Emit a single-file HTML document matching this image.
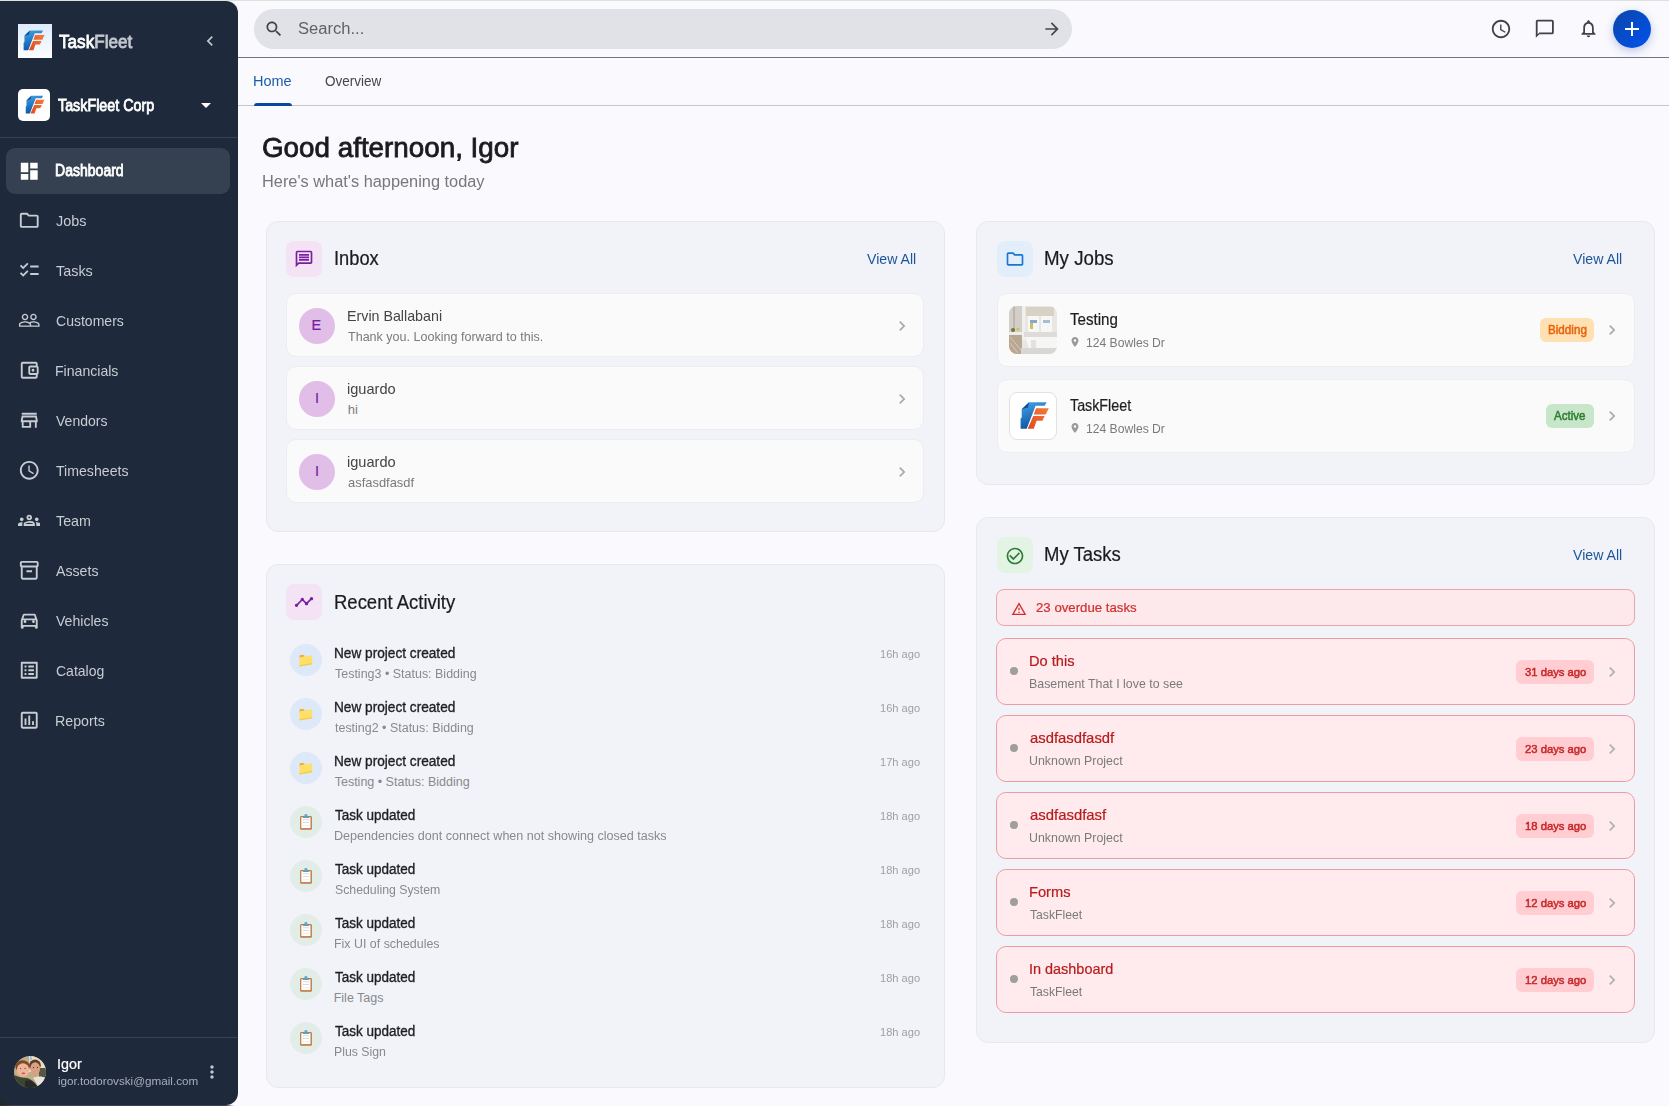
<!DOCTYPE html>
<html><head><meta charset="utf-8">
<style>
*{box-sizing:border-box;margin:0;padding:0}
html,body{width:1669px;height:1106px;overflow:hidden}
body{position:relative;background:#f9f9fe;font-family:"Liberation Sans",sans-serif}
.a{position:absolute;display:block}
.t{position:absolute;white-space:nowrap;line-height:1;transform-origin:0 0}
</style></head><body>
<div class="a" style="left:0;top:0;width:1669px;height:1px;background:#dfe1df"></div>
<div class="a" style="left:0;top:1090px;width:14px;height:16px;background:#252627"></div>
<div class="a" style="left:0;top:1105px;width:240px;height:1px;background:linear-gradient(90deg,#2a2c30 0,#3b4353 14px,#3b4353 226px,#f9f9fe 234px)"></div>
<div class="a" style="left:0;top:1px;width:238px;height:1104px;background:#1e293b;border-radius:0 12px 12px 9px"></div>
<div class="a" style="left:18px;top:24px;width:34px;height:34px;background:linear-gradient(180deg,#dcebfb,#fdfeff)"></div>
<svg class="a" style="left:15.4px;top:23.4px" width="35.7" height="35.7" viewBox="0 0 48 48">
<defs><linearGradient id="ba" x1="0" y1="0" x2="0.3" y2="1"><stop offset="0" stop-color="#45a3e6"/><stop offset="1" stop-color="#0b56a6"/></linearGradient>
<linearGradient id="oa" x1="1" y1="0" x2="0" y2="1"><stop offset="0" stop-color="#f47c3c"/><stop offset="1" stop-color="#e04a1c"/></linearGradient></defs>
<path fill="url(#ba)" d="M12.7 17.3 20 10.2H37.7L35.7 13.8H26.6L17.7 36.8H11.6V26.4L12.7 25.4Z"/>
<path fill="#0a4f9a" d="M12.7 17.3 20 10.2 19 15.5 12.7 17.3Z"/>
<path fill="url(#oa)" d="M27.1 16.2H39.8L36.7 22.6H24.8ZM24.3 24.1H35.7L33.4 28.8H27.6L24.8 36.8H18.7Z"/>
</svg>
<svg class="a" style="left:199.5px;top:31px;" width="20" height="20" viewBox="0 0 24 24"><path fill="#c3c7cf" d="M15.41 7.41L14 6l-6 6 6 6 1.41-1.41L10.83 12z"/></svg>
<div class="a" style="left:18px;top:89px;width:32px;height:32px;background:#fff;border-radius:5px"></div>
<svg class="a" style="left:18px;top:89px" width="32" height="32" viewBox="0 0 48 48">
<defs><linearGradient id="bb" x1="0" y1="0" x2="0.3" y2="1"><stop offset="0" stop-color="#45a3e6"/><stop offset="1" stop-color="#0b56a6"/></linearGradient>
<linearGradient id="ob" x1="1" y1="0" x2="0" y2="1"><stop offset="0" stop-color="#f47c3c"/><stop offset="1" stop-color="#e04a1c"/></linearGradient></defs>
<path fill="url(#bb)" d="M12.7 17.3 20 10.2H37.7L35.7 13.8H26.6L17.7 36.8H11.6V26.4L12.7 25.4Z"/>
<path fill="#0a4f9a" d="M12.7 17.3 20 10.2 19 15.5 12.7 17.3Z"/>
<path fill="url(#ob)" d="M27.1 16.2H39.8L36.7 22.6H24.8ZM24.3 24.1H35.7L33.4 28.8H27.6L24.8 36.8H18.7Z"/>
</svg>
<svg class="a" style="left:194px;top:93px;" width="24" height="24" viewBox="0 0 24 24"><path fill="#fff" d="M7 10l5 5 5-5z"/></svg>
<div class="a" style="left:0px;top:137px;width:238px;height:1px;background:#364152"></div>
<div class="a" style="left:6px;top:148px;width:224px;height:46px;background:#354051;border-radius:9px"></div>
<svg class="a" style="left:17.75px;top:159.75px;" width="22.5" height="22.5" viewBox="0 0 24 24"><path fill="#fff" d="M3 13h8V3H3v10zm0 8h8v-6H3v6zm10 0h8V11h-8v10zm0-18v6h8V3h-8z"/></svg>
<svg class="a" style="left:17.75px;top:209.25px;" width="22.5" height="22.5" viewBox="0 0 24 24"><path fill="#c8ccd3" d="M9.17 6l2 2H20v10H4V6h5.17M10 4H4c-1.1 0-1.99.9-1.99 2L2 18c0 1.1.9 2 2 2h16c1.1 0 2-.9 2-2V8c0-1.1-.9-2-2-2h-8l-2-2z"/></svg>
<svg class="a" style="left:17.75px;top:259.25px;" width="22.5" height="22.5" viewBox="0 0 24 24"><path fill="#c8ccd3" d="M22 7h-9v2h9V7zm0 8h-9v2h9v-2zM5.54 11 2 7.46l1.41-1.41 2.12 2.12 4.24-4.24 1.41 1.41L5.54 11zm0 8L2 15.46l1.41-1.41 2.12 2.12 4.24-4.24 1.41 1.41L5.54 19z"/></svg>
<svg class="a" style="left:17.75px;top:309.25px;" width="22.5" height="22.5" viewBox="0 0 24 24"><path fill="#c8ccd3" d="M16.5 13c-1.2 0-3.07.34-4.5 1-1.43-.67-3.3-1-4.5-1C5.33 13 1 14.08 1 16.25V19h22v-2.75c0-2.17-4.33-3.25-6.5-3.25zm-4 4.5h-10v-1.25c0-.54 2.56-1.75 5-1.75s5 1.21 5 1.75v1.25zm9 0H14v-1.25c0-.46-.2-.86-.52-1.22.88-.3 1.96-.53 3.02-.53 2.44 0 5 1.21 5 1.75v1.25zM7.5 12c1.93 0 3.5-1.57 3.5-3.5S9.43 5 7.5 5 4 6.57 4 8.5 5.57 12 7.5 12zm0-5.5c1.1 0 2 .9 2 2s-.9 2-2 2-2-.9-2-2 .9-2 2-2zm9 5.5c1.93 0 3.5-1.57 3.5-3.5S18.43 5 16.5 5 13 6.57 13 8.5s1.57 3.5 3.5 3.5zm0-5.5c1.1 0 2 .9 2 2s-.9 2-2 2-2-.9-2-2 .9-2 2-2z"/></svg>
<svg class="a" style="left:17.75px;top:359.25px;" width="22.5" height="22.5" viewBox="0 0 24 24"><path fill="#c8ccd3" d="M21 7.28V5c0-1.1-.9-2-2-2H5c-1.11 0-2 .9-2 2v14c0 1.1.89 2 2 2h14c1.1 0 2-.9 2-2v-2.28c.59-.35 1-.98 1-1.72V9c0-.74-.41-1.37-1-1.72zM20 9v6h-7V9h7zM5 19V5h14v2h-6c-1.1 0-2 .9-2 2v6c0 1.1.9 2 2 2h6v2H5zM16 13.5a1.5 1.5 0 1 0 0-3 1.5 1.5 0 0 0 0 3z"/></svg>
<svg class="a" style="left:17.75px;top:409.25px;" width="22.5" height="22.5" viewBox="0 0 24 24"><path fill="#c8ccd3" d="M18.36 9l.6 3H5.04l.6-3h12.72M20 4H4v2h16V4zm0 3H4l-1 5v2h1v6h10v-6h4v6h2v-6h1v-2l-1-5zM6 18v-4h6v4H6z"/></svg>
<svg class="a" style="left:17.75px;top:459.25px;" width="22.5" height="22.5" viewBox="0 0 24 24"><path fill="#c8ccd3" d="M11.99 2C6.47 2 2 6.48 2 12s4.47 10 9.99 10C17.52 22 22 17.52 22 12S17.52 2 11.99 2zM12 20c-4.42 0-8-3.58-8-8s3.58-8 8-8 8 3.58 8 8-3.58 8-8 8zm.5-13H11v6l5.25 3.15.75-1.23-4.5-2.67z"/></svg>
<svg class="a" style="left:17.75px;top:509.25px;" width="22.5" height="22.5" viewBox="0 0 24 24"><path fill="#c8ccd3" d="M4 13c1.1 0 2-.9 2-2s-.9-2-2-2-2 .9-2 2 .9 2 2 2zm1.13 1.1c-.37-.06-.74-.1-1.13-.1-.99 0-1.93.21-2.78.58C.48 14.9 0 15.62 0 16.43V18h4.5v-1.61c0-.83.23-1.61.63-2.29zM20 13c1.1 0 2-.9 2-2s-.9-2-2-2-2 .9-2 2 .9 2 2 2zm4 3.43c0-.81-.48-1.53-1.22-1.85-.85-.37-1.79-.58-2.78-.58-.39 0-.76.04-1.13.1.4.68.63 1.46.63 2.29V18H24v-1.57zm-6.76-2.78c-1.17-.52-2.61-.9-4.24-.9-1.63 0-3.07.39-4.24.9C6.68 14.13 6 15.21 6 16.39V18h12v-1.61c0-1.18-.68-2.26-1.76-2.74zM8.07 16c.09-.23.13-.39.91-.69.97-.38 1.99-.56 3.02-.56s2.05.18 3.02.56c.77.3.81.46.91.69H8.07zM12 8c.55 0 1 .45 1 1s-.45 1-1 1-1-.45-1-1 .45-1 1-1m0-2c-1.66 0-3 1.34-3 3s1.34 3 3 3 3-1.34 3-3-1.34-3-3-3z"/></svg>
<svg class="a" style="left:17.75px;top:559.25px;" width="22.5" height="22.5" viewBox="0 0 24 24"><path fill="#c8ccd3" d="M20 2H4c-1 0-2 .9-2 2v3.01c0 .72.43 1.34 1 1.69V20c0 1.1 1.1 2 2 2h14c.9 0 2-.9 2-2V8.7c.57-.35 1-.97 1-1.69V4c0-1.1-1-2-2-2zm-1 18H5V9h14v11zm1-13H4V4h16v3zM9 12h6v2H9z"/></svg>
<svg class="a" style="left:17.75px;top:609.25px;" width="22.5" height="22.5" viewBox="0 0 24 24"><path fill="#c8ccd3" d="M18.92 6.01C18.72 5.42 18.16 5 17.5 5h-11c-.66 0-1.21.42-1.42 1.01L3 12v8c0 .55.45 1 1 1h1c.55 0 1-.45 1-1v-1h12v1c0 .55.45 1 1 1h1c.55 0 1-.45 1-1v-8l-2.08-5.99zM6.85 7h10.29l1.08 3.11H5.77L6.85 7zM19 17H5v-5h14v5zM7.5 15a1.5 1.5 0 1 0 0-3 1.5 1.5 0 0 0 0 3zM16.5 15a1.5 1.5 0 1 0 0-3 1.5 1.5 0 0 0 0 3z"/></svg>
<svg class="a" style="left:17.75px;top:659.25px;" width="22.5" height="22.5" viewBox="0 0 24 24"><path fill="#c8ccd3" d="M19 5v14H5V5h14m1.1-2H3.9c-.5 0-.9.4-.9.9v16.2c0 .4.4.9.9.9h16.2c.4 0 .9-.5.9-.9V3.9c0-.5-.5-.9-.9-.9zM11 7h6v2h-6V7zm0 4h6v2h-6v-2zm0 4h6v2h-6zM7 7h2v2H7zm0 4h2v2H7zm0 4h2v2H7z"/></svg>
<svg class="a" style="left:17.75px;top:709.25px;" width="22.5" height="22.5" viewBox="0 0 24 24"><path fill="#c8ccd3" d="M19 3H5c-1.1 0-2 .9-2 2v14c0 1.1.9 2 2 2h14c1.1 0 2-.9 2-2V5c0-1.1-.9-2-2-2zm0 16H5V5h14v14zM7 10h2v7H7zm4-3h2v10h-2zm4 6h2v4h-2z"/></svg>
<div class="a" style="left:0px;top:1037px;width:238px;height:1px;background:#364152"></div>
<svg class="a" style="left:14px;top:1056px;filter:blur(0.3px)" width="32" height="32" viewBox="0 0 32 32"><defs><clipPath id="avc"><circle cx="16" cy="16" r="16"/></clipPath></defs><g clip-path="url(#avc)">
<rect width="32" height="32" fill="#c2ab88"/><rect x="15" y="0" width="17" height="16" fill="#e9dcc4"/><rect x="16" y="0" width="2" height="4" fill="#9ec3e6"/><rect x="25" y="12" width="8" height="12" fill="#555644"/>
<ellipse cx="8.6" cy="10.5" rx="7.2" ry="6.2" fill="#7a4a2a"/><ellipse cx="21" cy="9.2" rx="5.8" ry="5.6" fill="#5e3d25"/>
<ellipse cx="9" cy="14" rx="6.3" ry="6.8" fill="#efb596"/><ellipse cx="21.2" cy="12.5" rx="4.9" ry="6.3" fill="#d9a084"/>
<circle cx="6.6" cy="12.6" r=".7" fill="#4a5d78"/><circle cx="11.1" cy="12.4" r=".7" fill="#4a5d78"/><circle cx="19.4" cy="11.6" r=".6" fill="#3a2a22"/><circle cx="23.4" cy="11.6" r=".6" fill="#3a2a22"/><ellipse cx="9.4" cy="17.4" rx="1.8" ry=".8" fill="#b85a55"/>
<path d="M0 19 C4 21 9 22 13 22 C17 23 22 27 25 32 L0 32Z" fill="#3b4530"/><path d="M11 25 C15 23 19 25 23 30 L21 32 L11 32Z" fill="#262a2a"/>
<path d="M19 22 C23 20 28 20 32 22 L32 32 L24 32 C23 28 21 24 19 22Z" fill="#e9e3d8"/>
</g></svg>
<svg class="a" style="left:202px;top:1062px;" width="20" height="20" viewBox="0 0 24 24"><path fill="#c3c7cf" d="M12 8c1.1 0 2-.9 2-2s-.9-2-2-2-2 .9-2 2 .9 2 2 2zm0 2c-1.1 0-2 .9-2 2s.9 2 2 2 2-.9 2-2-.9-2-2-2zm0 6c-1.1 0-2 .9-2 2s.9 2 2 2 2-.9 2-2-.9-2-2-2z"/></svg>
<div class="a" style="left:238px;top:57px;width:1431px;height:1px;background:#72767e"></div>
<div class="a" style="left:254px;top:9px;width:818px;height:40px;background:#e1e2e7;border-radius:20px"></div>
<svg class="a" style="left:264px;top:19px;" width="20" height="20" viewBox="0 0 24 24"><path fill="#3f4248" d="M15.5 14h-.79l-.28-.27C15.41 12.59 16 11.11 16 9.5 16 5.91 13.09 3 9.5 3S3 5.91 3 9.5 5.91 16 9.5 16c1.61 0 3.09-.59 4.23-1.57l.27.28v.79l5 4.99L20.49 19l-4.99-5zm-6 0C7.01 14 5 11.99 5 9.5S7.01 5 9.5 5 14 7.01 14 9.5 11.99 14 9.5 14z"/></svg>
<svg class="a" style="left:1042px;top:19px;" width="20" height="20" viewBox="0 0 24 24"><path fill="#44474d" d="M12 4l-1.41 1.41L16.17 11H4v2h12.17l-5.58 5.59L12 20l8-8z"/></svg>
<svg class="a" style="left:1490px;top:17.7px;" width="22" height="22" viewBox="0 0 24 24"><path fill="#3f4248" d="M11.99 2C6.47 2 2 6.48 2 12s4.47 10 9.99 10C17.52 22 22 17.52 22 12S17.52 2 11.99 2zM12 20c-4.42 0-8-3.58-8-8s3.58-8 8-8 8 3.58 8 8-3.58 8-8 8zm.5-13H11v6l5.25 3.15.75-1.23-4.5-2.67z"/></svg>
<svg class="a" style="left:1534.2px;top:17.9px;" width="21.6" height="21.6" viewBox="0 0 24 24"><path fill="#3f4248" d="M20 2H4c-1.1 0-2 .9-2 2v18l4-4h14c1.1 0 2-.9 2-2V4c0-1.1-.9-2-2-2zm0 14H6l-2 2V4h16v12z"/></svg>
<svg class="a" style="left:1578.4px;top:18px;" width="21" height="21" viewBox="0 0 24 24"><path fill="#3f4248" d="M12 22c1.1 0 2-.9 2-2h-4c0 1.1.89 2 2 2zm6-6v-5c0-3.07-1.64-5.64-4.5-6.32V4c0-.83-.67-1.5-1.5-1.5s-1.5.67-1.5 1.5v.68C7.63 5.36 6 7.92 6 11v5l-2 2v1h16v-1l-2-2zm-2 1H8v-6c0-2.48 1.51-4.5 4-4.5s4 2.02 4 4.5v6z"/></svg>
<div class="a" style="left:1613px;top:10px;width:38px;height:38px;border-radius:50%;background:linear-gradient(135deg,#0b47a8,#0052f0);box-shadow:0 3px 8px rgba(30,60,160,.28)"></div>
<svg class="a" style="left:1620px;top:17px;" width="24" height="24" viewBox="0 0 24 24"><path fill="#fff" d="M19 13h-6v6h-2v-6H5v-2h6V5h2v6h6v2z"/></svg>
<div class="a" style="left:238px;top:105px;width:1431px;height:1px;background:#c7c8cd"></div>
<div class="a" style="left:254px;top:103px;width:38px;height:3px;background:#0b47a1;border-radius:3px 3px 0 0"></div>
<div class="a" style="left:266px;top:221px;width:679px;height:311px;background:#f2f3f8;border:1px solid #e9e9ec;border-radius:12px"></div>
<div class="a" style="left:286px;top:241px;width:36px;height:36px;background:#f3e3f4;border-radius:8px"></div>
<svg class="a" style="left:294px;top:249px;" width="20" height="20" viewBox="0 0 24 24"><path fill="#7b1fa2" d="M4 4h16v12H5.17L4 17.17V4m0-2c-1.1 0-1.99.9-1.99 2L2 22l4-4h14c1.1 0 2-.9 2-2V4c0-1.1-.9-2-2-2H4zm2 10h12v2H6v-2zm0-3h12v2H6V9zm0-3h12v2H6V6z"/></svg>
<div class="a" style="left:286px;top:293px;width:638px;height:64px;background:#fafafa;border:1px solid #ededf0;border-radius:10px"></div>
<div class="a" style="left:299px;top:307.5px;width:36px;height:36px;background:#e1bee7;border-radius:50%"></div>
<svg class="a" style="left:891.6px;top:315.8px;" width="20" height="20" viewBox="0 0 24 24"><path fill="#aaaaaa" d="M10 6L8.59 7.41 13.17 12l-4.58 4.59L10 18l6-6z"/></svg>
<div class="a" style="left:286px;top:366px;width:638px;height:64px;background:#fafafa;border:1px solid #ededf0;border-radius:10px"></div>
<div class="a" style="left:299px;top:380.5px;width:36px;height:36px;background:#e1bee7;border-radius:50%"></div>
<svg class="a" style="left:891.6px;top:388.8px;" width="20" height="20" viewBox="0 0 24 24"><path fill="#aaaaaa" d="M10 6L8.59 7.41 13.17 12l-4.58 4.59L10 18l6-6z"/></svg>
<div class="a" style="left:286px;top:439px;width:638px;height:64px;background:#fafafa;border:1px solid #ededf0;border-radius:10px"></div>
<div class="a" style="left:299px;top:453.5px;width:36px;height:36px;background:#e1bee7;border-radius:50%"></div>
<svg class="a" style="left:891.6px;top:461.8px;" width="20" height="20" viewBox="0 0 24 24"><path fill="#aaaaaa" d="M10 6L8.59 7.41 13.17 12l-4.58 4.59L10 18l6-6z"/></svg>
<div class="a" style="left:266px;top:564px;width:679px;height:524px;background:#f2f3f8;border:1px solid #e9e9ec;border-radius:12px"></div>
<div class="a" style="left:286px;top:584px;width:36px;height:36px;background:#f3e3f4;border-radius:8px"></div>
<svg class="a" style="left:294px;top:592px;" width="20" height="20" viewBox="0 0 24 24"><path fill="#7b1fa2" d="M23 8c0 1.1-.9 2-2 2-.18 0-.35-.02-.51-.07l-3.56 3.55c.05.16.07.34.07.52 0 1.1-.9 2-2 2s-2-.9-2-2c0-.18.02-.36.07-.52l-2.55-2.55c-.16.05-.34.07-.52.07s-.36-.02-.52-.07l-4.55 4.56c.05.16.07.33.07.51 0 1.1-.9 2-2 2s-2-.9-2-2 .9-2 2-2c.18 0 .35.02.51.07l4.56-4.55C8.02 9.36 8 9.18 8 9c0-1.1.9-2 2-2s2 .9 2 2c0 .18-.02.36-.07.52l2.55 2.55c.16-.05.34-.07.52-.07s.36.02.52.07l3.55-3.56C19.02 8.35 19 8.18 19 8c0-1.1.9-2 2-2s2 .9 2 2z"/></svg>
<div class="a" style="left:290px;top:644px;width:32px;height:32px;background:#dde8f8;border-radius:50%"></div>
<svg class="a" style="left:298px;top:652px" width="16" height="16" viewBox="0 0 16 16"><rect x="1.6" y="2.9" width="4.8" height="4.2" rx="1.2" fill="#f2a93b"/><path fill="#fedf68" d="M1.5 5.4 6 4.6 14.1 3.2 14.1 12.3 1.5 14.6Z"/><path fill="#f6c94a" d="M1.5 13.2 14.1 10.9 14.1 12.3 1.5 14.6Z"/></svg>
<div class="a" style="left:290px;top:698px;width:32px;height:32px;background:#dde8f8;border-radius:50%"></div>
<svg class="a" style="left:298px;top:706px" width="16" height="16" viewBox="0 0 16 16"><rect x="1.6" y="2.9" width="4.8" height="4.2" rx="1.2" fill="#f2a93b"/><path fill="#fedf68" d="M1.5 5.4 6 4.6 14.1 3.2 14.1 12.3 1.5 14.6Z"/><path fill="#f6c94a" d="M1.5 13.2 14.1 10.9 14.1 12.3 1.5 14.6Z"/></svg>
<div class="a" style="left:290px;top:752px;width:32px;height:32px;background:#dde8f8;border-radius:50%"></div>
<svg class="a" style="left:298px;top:760px" width="16" height="16" viewBox="0 0 16 16"><rect x="1.6" y="2.9" width="4.8" height="4.2" rx="1.2" fill="#f2a93b"/><path fill="#fedf68" d="M1.5 5.4 6 4.6 14.1 3.2 14.1 12.3 1.5 14.6Z"/><path fill="#f6c94a" d="M1.5 13.2 14.1 10.9 14.1 12.3 1.5 14.6Z"/></svg>
<div class="a" style="left:290px;top:806px;width:32px;height:32px;background:#e1ede6;border-radius:50%"></div>
<svg class="a" style="left:299px;top:810px" width="14" height="20" viewBox="0 0 14 20"><rect x="1.1" y="5.9" width="11.8" height="13.9" rx="1.3" fill="#c27a40"/><rect x="2.3" y="7.2" width="9.2" height="10.9" fill="#fefefe"/><rect x="3.9" y="9.3" width="6" height=".9" fill="#d3d8de"/><rect x="3.9" y="12" width="6" height=".9" fill="#d3d8de"/><rect x="3.9" y="15.1" width="6" height=".6" fill="#e6e8ea"/><path d="M3.6 7.9 4.6 6.2H9.4L10.4 7.9Z" fill="#5f9cba"/><rect x="5.4" y="4" width="3" height="2.6" rx="1.2" fill="#6ea8c4"/></svg>
<div class="a" style="left:290px;top:860px;width:32px;height:32px;background:#e1ede6;border-radius:50%"></div>
<svg class="a" style="left:299px;top:864px" width="14" height="20" viewBox="0 0 14 20"><rect x="1.1" y="5.9" width="11.8" height="13.9" rx="1.3" fill="#c27a40"/><rect x="2.3" y="7.2" width="9.2" height="10.9" fill="#fefefe"/><rect x="3.9" y="9.3" width="6" height=".9" fill="#d3d8de"/><rect x="3.9" y="12" width="6" height=".9" fill="#d3d8de"/><rect x="3.9" y="15.1" width="6" height=".6" fill="#e6e8ea"/><path d="M3.6 7.9 4.6 6.2H9.4L10.4 7.9Z" fill="#5f9cba"/><rect x="5.4" y="4" width="3" height="2.6" rx="1.2" fill="#6ea8c4"/></svg>
<div class="a" style="left:290px;top:914px;width:32px;height:32px;background:#e1ede6;border-radius:50%"></div>
<svg class="a" style="left:299px;top:918px" width="14" height="20" viewBox="0 0 14 20"><rect x="1.1" y="5.9" width="11.8" height="13.9" rx="1.3" fill="#c27a40"/><rect x="2.3" y="7.2" width="9.2" height="10.9" fill="#fefefe"/><rect x="3.9" y="9.3" width="6" height=".9" fill="#d3d8de"/><rect x="3.9" y="12" width="6" height=".9" fill="#d3d8de"/><rect x="3.9" y="15.1" width="6" height=".6" fill="#e6e8ea"/><path d="M3.6 7.9 4.6 6.2H9.4L10.4 7.9Z" fill="#5f9cba"/><rect x="5.4" y="4" width="3" height="2.6" rx="1.2" fill="#6ea8c4"/></svg>
<div class="a" style="left:290px;top:968px;width:32px;height:32px;background:#e1ede6;border-radius:50%"></div>
<svg class="a" style="left:299px;top:972px" width="14" height="20" viewBox="0 0 14 20"><rect x="1.1" y="5.9" width="11.8" height="13.9" rx="1.3" fill="#c27a40"/><rect x="2.3" y="7.2" width="9.2" height="10.9" fill="#fefefe"/><rect x="3.9" y="9.3" width="6" height=".9" fill="#d3d8de"/><rect x="3.9" y="12" width="6" height=".9" fill="#d3d8de"/><rect x="3.9" y="15.1" width="6" height=".6" fill="#e6e8ea"/><path d="M3.6 7.9 4.6 6.2H9.4L10.4 7.9Z" fill="#5f9cba"/><rect x="5.4" y="4" width="3" height="2.6" rx="1.2" fill="#6ea8c4"/></svg>
<div class="a" style="left:290px;top:1022px;width:32px;height:32px;background:#e1ede6;border-radius:50%"></div>
<svg class="a" style="left:299px;top:1026px" width="14" height="20" viewBox="0 0 14 20"><rect x="1.1" y="5.9" width="11.8" height="13.9" rx="1.3" fill="#c27a40"/><rect x="2.3" y="7.2" width="9.2" height="10.9" fill="#fefefe"/><rect x="3.9" y="9.3" width="6" height=".9" fill="#d3d8de"/><rect x="3.9" y="12" width="6" height=".9" fill="#d3d8de"/><rect x="3.9" y="15.1" width="6" height=".6" fill="#e6e8ea"/><path d="M3.6 7.9 4.6 6.2H9.4L10.4 7.9Z" fill="#5f9cba"/><rect x="5.4" y="4" width="3" height="2.6" rx="1.2" fill="#6ea8c4"/></svg>
<div class="a" style="left:976px;top:221px;width:679px;height:263.5px;background:#f2f3f8;border:1px solid #e9e9ec;border-radius:12px"></div>
<div class="a" style="left:997px;top:241px;width:36px;height:36px;background:#e2effb;border-radius:8px"></div>
<svg class="a" style="left:1005px;top:249px;" width="20" height="20" viewBox="0 0 24 24"><path fill="#1976d2" d="M9.17 6l2 2H20v10H4V6h5.17M10 4H4c-1.1 0-1.99.9-1.99 2L2 18c0 1.1.9 2 2 2h16c1.1 0 2-.9 2-2V8c0-1.1-.9-2-2-2h-8l-2-2z"/></svg>
<div class="a" style="left:997px;top:293px;width:638px;height:74px;background:#fafafa;border:1px solid #ededf0;border-radius:10px"></div>
<svg class="a" style="left:1009px;top:305.5px;filter:blur(0.35px)" width="48" height="48" viewBox="0 0 48 48"><defs><clipPath id="thc"><rect width="48" height="48" rx="8"/></clipPath></defs><g clip-path="url(#thc)">
<rect width="48" height="48" fill="#e9e7e4"/><rect x="0" y="0" width="14" height="30" fill="#d3cec8"/><rect x="4" y="0" width="2" height="28" fill="#bdb6ae"/><rect x="13" y="0" width="3" height="34" fill="#f1f0ee"/>
<rect x="17" y="1" width="28" height="9" fill="#d9d1c5"/><rect x="19" y="10" width="11" height="16" fill="#f7f7f6"/><rect x="32" y="10" width="11" height="16" fill="#f7f7f6"/>
<rect x="21" y="14" width="7" height="3" fill="#8aa6cc"/><rect x="34" y="14" width="7" height="3" fill="#a9bcd6"/><rect x="21" y="17" width="3" height="6" fill="#c9bf6a"/>
<rect x="15" y="26" width="33" height="5" fill="#dedcd9"/><path d="M16 31 H48 V42 C44 45 24 45 20 42 Z" fill="#f6f6f6"/><rect x="22" y="34" width="5" height="13" fill="#e4e2df"/>
<path d="M0 29 H13 V48 H0Z" fill="#b8a791"/><path d="M1 31 L12 44 M1 37 L9 47" stroke="#d6cabb" stroke-width="1"/><rect x="0" y="26" width="13" height="3" fill="#efece8"/>
<circle cx="4" cy="24" r="2" fill="#6b7a3e"/><circle cx="9" cy="23" r="1.6" fill="#c8c25a"/><rect x="12" y="42" width="36" height="6" fill="#d9d7d3"/>
</g></svg>
<svg class="a" style="left:1069px;top:336px;" width="12" height="12" viewBox="0 0 24 24"><path fill="#9a9a9a" d="M12 2C8.13 2 5 5.13 5 9c0 5.25 7 13 7 13s7-7.75 7-13c0-3.87-3.13-7-7-7zm0 9.5c-1.38 0-2.5-1.12-2.5-2.5s1.12-2.5 2.5-2.5 2.5 1.12 2.5 2.5-1.12 2.5-2.5 2.5z"/></svg>
<div class="a" style="left:1539.5px;top:317.5px;width:54.5px;height:24px;background:#ffe0b2;border-radius:6px"></div>
<svg class="a" style="left:1602px;top:319.5px;" width="20" height="20" viewBox="0 0 24 24"><path fill="#aaaaaa" d="M10 6L8.59 7.41 13.17 12l-4.58 4.59L10 18l6-6z"/></svg>
<div class="a" style="left:997px;top:379px;width:638px;height:74px;background:#fafafa;border:1px solid #ededf0;border-radius:10px"></div>
<div class="a" style="left:1009px;top:391.5px;width:48px;height:48px;background:#fff;border:1px solid #e2e2e2;border-radius:8px"></div>
<svg class="a" style="left:1009px;top:391.5px" width="48" height="48" viewBox="0 0 48 48">
<defs><linearGradient id="bc" x1="0" y1="0" x2="0.3" y2="1"><stop offset="0" stop-color="#45a3e6"/><stop offset="1" stop-color="#0b56a6"/></linearGradient>
<linearGradient id="oc" x1="1" y1="0" x2="0" y2="1"><stop offset="0" stop-color="#f47c3c"/><stop offset="1" stop-color="#e04a1c"/></linearGradient></defs>
<path fill="url(#bc)" d="M12.7 17.3 20 10.2H37.7L35.7 13.8H26.6L17.7 36.8H11.6V26.4L12.7 25.4Z"/>
<path fill="#0a4f9a" d="M12.7 17.3 20 10.2 19 15.5 12.7 17.3Z"/>
<path fill="url(#oc)" d="M27.1 16.2H39.8L36.7 22.6H24.8ZM24.3 24.1H35.7L33.4 28.8H27.6L24.8 36.8H18.7Z"/>
</svg>
<svg class="a" style="left:1069px;top:422px;" width="12" height="12" viewBox="0 0 24 24"><path fill="#9a9a9a" d="M12 2C8.13 2 5 5.13 5 9c0 5.25 7 13 7 13s7-7.75 7-13c0-3.87-3.13-7-7-7zm0 9.5c-1.38 0-2.5-1.12-2.5-2.5s1.12-2.5 2.5-2.5 2.5 1.12 2.5 2.5-1.12 2.5-2.5 2.5z"/></svg>
<div class="a" style="left:1546px;top:403.5px;width:48px;height:24px;background:#c8e6c9;border-radius:6px"></div>
<svg class="a" style="left:1602px;top:405.5px;" width="20" height="20" viewBox="0 0 24 24"><path fill="#aaaaaa" d="M10 6L8.59 7.41 13.17 12l-4.58 4.59L10 18l6-6z"/></svg>
<div class="a" style="left:976px;top:517px;width:679px;height:525.5px;background:#f2f3f8;border:1px solid #e9e9ec;border-radius:12px"></div>
<div class="a" style="left:997px;top:537px;width:36px;height:36px;background:#e3f3e4;border-radius:8px"></div>
<svg class="a" style="left:1004.5px;top:545.5px;" width="20" height="20" viewBox="0 0 24 24"><path fill="#2e7d32" d="M16.59 7.58L10 14.17l-3.59-3.58L5 12l5 5 8-8zM12 2C6.48 2 2 6.48 2 12s4.48 10 10 10 10-4.48 10-10S17.52 2 12 2zm0 18c-4.42 0-8-3.58-8-8s3.58-8 8-8 8 3.58 8 8-3.58 8-8 8z"/></svg>
<div class="a" style="left:996px;top:589px;width:639px;height:37px;background:#fde9ec;border:1px solid #eea3a9;border-radius:8px"></div>
<svg class="a" style="left:1010.6px;top:601px;" width="16" height="16" viewBox="0 0 24 24"><path fill="#d32f2f" d="M12 5.99L19.53 19H4.47L12 5.99M12 2L1 21h22L12 2zm1 14h-2v2h2v-2zm0-6h-2v4h2v-4z"/></svg>
<div class="a" style="left:996px;top:638px;width:639px;height:67px;background:#ffebee;border:1px solid #ee9ca3;border-radius:10px"></div>
<div class="a" style="left:1009.5px;top:667.3px;width:8px;height:8px;background:#9e9e9e;border-radius:50%"></div>
<div class="a" style="left:1516px;top:659.5px;width:78px;height:24px;background:#ffcdd2;border-radius:6px"></div>
<svg class="a" style="left:1602px;top:662px;" width="20" height="20" viewBox="0 0 24 24"><path fill="#b0b0b0" d="M10 6L8.59 7.41 13.17 12l-4.58 4.59L10 18l6-6z"/></svg>
<div class="a" style="left:996px;top:715px;width:639px;height:67px;background:#ffebee;border:1px solid #ee9ca3;border-radius:10px"></div>
<div class="a" style="left:1009.5px;top:744.3px;width:8px;height:8px;background:#9e9e9e;border-radius:50%"></div>
<div class="a" style="left:1516px;top:736.5px;width:78px;height:24px;background:#ffcdd2;border-radius:6px"></div>
<svg class="a" style="left:1602px;top:739px;" width="20" height="20" viewBox="0 0 24 24"><path fill="#b0b0b0" d="M10 6L8.59 7.41 13.17 12l-4.58 4.59L10 18l6-6z"/></svg>
<div class="a" style="left:996px;top:792px;width:639px;height:67px;background:#ffebee;border:1px solid #ee9ca3;border-radius:10px"></div>
<div class="a" style="left:1009.5px;top:821.3px;width:8px;height:8px;background:#9e9e9e;border-radius:50%"></div>
<div class="a" style="left:1516px;top:813.5px;width:78px;height:24px;background:#ffcdd2;border-radius:6px"></div>
<svg class="a" style="left:1602px;top:816px;" width="20" height="20" viewBox="0 0 24 24"><path fill="#b0b0b0" d="M10 6L8.59 7.41 13.17 12l-4.58 4.59L10 18l6-6z"/></svg>
<div class="a" style="left:996px;top:869px;width:639px;height:67px;background:#ffebee;border:1px solid #ee9ca3;border-radius:10px"></div>
<div class="a" style="left:1009.5px;top:898.3px;width:8px;height:8px;background:#9e9e9e;border-radius:50%"></div>
<div class="a" style="left:1516px;top:890.5px;width:78px;height:24px;background:#ffcdd2;border-radius:6px"></div>
<svg class="a" style="left:1602px;top:893px;" width="20" height="20" viewBox="0 0 24 24"><path fill="#b0b0b0" d="M10 6L8.59 7.41 13.17 12l-4.58 4.59L10 18l6-6z"/></svg>
<div class="a" style="left:996px;top:946px;width:639px;height:67px;background:#ffebee;border:1px solid #ee9ca3;border-radius:10px"></div>
<div class="a" style="left:1009.5px;top:975.3px;width:8px;height:8px;background:#9e9e9e;border-radius:50%"></div>
<div class="a" style="left:1516px;top:967.5px;width:78px;height:24px;background:#ffcdd2;border-radius:6px"></div>
<svg class="a" style="left:1602px;top:970px;" width="20" height="20" viewBox="0 0 24 24"><path fill="#b0b0b0" d="M10 6L8.59 7.41 13.17 12l-4.58 4.59L10 18l6-6z"/></svg>
<div class="t" style="left:59.00px;top:31.81px;font-size:19px;font-weight:400;color:#fff;transform:scaleX(0.9021);-webkit-text-stroke:0.8px currentColor;">Task<span style="color:#c3c7cf">Fleet</span></div>
<div class="t" style="left:58.00px;top:96.83px;font-size:16.5px;font-weight:400;color:#fff;transform:scaleX(0.8666);-webkit-text-stroke:0.8px currentColor;">TaskFleet Corp</div>
<div class="t" style="left:55.12px;top:163.05px;font-size:16px;font-weight:400;color:#fff;transform:scaleX(0.8773);-webkit-text-stroke:0.8px currentColor;">Dashboard</div>
<div class="t" style="left:56.00px;top:212.60px;font-size:15px;font-weight:400;color:#c8ccd3;transform:scaleX(0.9620);">Jobs</div>
<div class="t" style="left:56.00px;top:262.60px;font-size:15px;font-weight:400;color:#c8ccd3;transform:scaleX(0.9592);">Tasks</div>
<div class="t" style="left:56.00px;top:312.60px;font-size:15px;font-weight:400;color:#c8ccd3;transform:scaleX(0.9359);">Customers</div>
<div class="t" style="left:55.06px;top:362.60px;font-size:15px;font-weight:400;color:#c8ccd3;transform:scaleX(0.9390);">Financials</div>
<div class="t" style="left:56.00px;top:412.60px;font-size:15px;font-weight:400;color:#c8ccd3;transform:scaleX(0.9351);">Vendors</div>
<div class="t" style="left:56.00px;top:462.60px;font-size:15px;font-weight:400;color:#c8ccd3;transform:scaleX(0.9415);">Timesheets</div>
<div class="t" style="left:56.00px;top:512.60px;font-size:15px;font-weight:400;color:#c8ccd3;transform:scaleX(0.9534);">Team</div>
<div class="t" style="left:56.00px;top:562.60px;font-size:15px;font-weight:400;color:#c8ccd3;transform:scaleX(0.9435);">Assets</div>
<div class="t" style="left:56.00px;top:612.60px;font-size:15px;font-weight:400;color:#c8ccd3;transform:scaleX(0.9392);">Vehicles</div>
<div class="t" style="left:56.00px;top:662.60px;font-size:15px;font-weight:400;color:#c8ccd3;transform:scaleX(0.9346);">Catalog</div>
<div class="t" style="left:55.05px;top:712.60px;font-size:15px;font-weight:400;color:#c8ccd3;transform:scaleX(0.9486);">Reports</div>
<div class="t" style="left:57.38px;top:1056.65px;font-size:14px;font-weight:400;color:#fff;transform:scaleX(1.0229);-webkit-text-stroke:0.22px currentColor;">Igor</div>
<div class="t" style="left:58.40px;top:1075.96px;font-size:11.5px;font-weight:400;color:#a9afb9;transform:scaleX(1.0142);">igor.todorovski@gmail.com</div>
<div class="t" style="left:298.40px;top:20.85px;font-size:16px;font-weight:400;color:#5f6167;transform:scaleX(1.0354);">Search...</div>
<div class="t" style="left:253.44px;top:73.30px;font-size:15px;font-weight:400;color:#1b5ca8;transform:scaleX(0.9646);">Home</div>
<div class="t" style="left:324.50px;top:73.30px;font-size:15px;font-weight:400;color:#46474c;transform:scaleX(0.9014);">Overview</div>
<div class="t" style="left:261.61px;top:134.29px;font-size:28px;font-weight:400;color:#1b1b1f;transform:scaleX(0.9927);-webkit-text-stroke:0.8px currentColor;">Good afternoon, Igor</div>
<div class="t" style="left:261.98px;top:174.05px;font-size:16px;font-weight:400;color:#77777c;transform:scaleX(1.0217);">Here's what's happening today</div>
<div class="t" style="left:334.49px;top:248.27px;font-size:20px;font-weight:400;color:#1b1b1f;transform:scaleX(0.9139);-webkit-text-stroke:0.22px currentColor;">Inbox</div>
<div class="t" style="left:866.60px;top:250.80px;font-size:15px;font-weight:400;color:#1b559c;transform:scaleX(0.9422);">View All</div>
<div class="t" style="left:311.50px;top:317.62px;font-size:14.5px;font-weight:400;color:#7b1fa2;-webkit-text-stroke:0.22px currentColor;">E</div>
<div class="t" style="left:346.85px;top:308.30px;font-size:15px;font-weight:400;color:#444446;transform:scaleX(0.9501);">Ervin Ballabani</div>
<div class="t" style="left:347.80px;top:329.69px;font-size:13px;font-weight:400;color:#7a7a7c;transform:scaleX(0.9647);">Thank you. Looking forward to this.</div>
<div class="t" style="left:315.00px;top:390.62px;font-size:14.5px;font-weight:400;color:#7b1fa2;-webkit-text-stroke:0.22px currentColor;">I</div>
<div class="t" style="left:346.83px;top:381.30px;font-size:15px;font-weight:400;color:#444446;transform:scaleX(0.9734);">iguardo</div>
<div class="t" style="left:347.80px;top:402.69px;font-size:13px;font-weight:400;color:#7a7a7c;">hi</div>
<div class="t" style="left:315.00px;top:463.62px;font-size:14.5px;font-weight:400;color:#7b1fa2;-webkit-text-stroke:0.22px currentColor;">I</div>
<div class="t" style="left:346.83px;top:454.30px;font-size:15px;font-weight:400;color:#444446;transform:scaleX(0.9734);">iguardo</div>
<div class="t" style="left:347.80px;top:475.69px;font-size:13px;font-weight:400;color:#7a7a7c;transform:scaleX(0.9944);">asfasdfasdf</div>
<div class="t" style="left:333.68px;top:591.87px;font-size:20px;font-weight:400;color:#1b1b1f;transform:scaleX(0.9241);-webkit-text-stroke:0.22px currentColor;">Recent Activity</div>
<div class="t" style="left:333.73px;top:646.25px;font-size:14px;font-weight:400;color:#1f1f22;transform:scaleX(0.9746);-webkit-text-stroke:0.35px currentColor;">New project created</div>
<div class="t" style="left:334.70px;top:667.62px;font-size:12.5px;font-weight:400;color:#88898d;transform:scaleX(0.9978);">Testing3 • Status: Bidding</div>
<div class="t" style="left:880.00px;top:648.59px;font-size:11px;font-weight:400;color:#9fa0a4;transform:scaleX(1.0090);">16h ago</div>
<div class="t" style="left:333.73px;top:700.25px;font-size:14px;font-weight:400;color:#1f1f22;transform:scaleX(0.9746);-webkit-text-stroke:0.35px currentColor;">New project created</div>
<div class="t" style="left:334.70px;top:721.62px;font-size:12.5px;font-weight:400;color:#88898d;transform:scaleX(0.9969);">testing2 • Status: Bidding</div>
<div class="t" style="left:880.00px;top:702.59px;font-size:11px;font-weight:400;color:#9fa0a4;transform:scaleX(1.0090);">16h ago</div>
<div class="t" style="left:333.73px;top:754.25px;font-size:14px;font-weight:400;color:#1f1f22;transform:scaleX(0.9746);-webkit-text-stroke:0.35px currentColor;">New project created</div>
<div class="t" style="left:334.70px;top:775.62px;font-size:12.5px;font-weight:400;color:#88898d;">Testing • Status: Bidding</div>
<div class="t" style="left:880.00px;top:756.59px;font-size:11px;font-weight:400;color:#9fa0a4;transform:scaleX(1.0090);">17h ago</div>
<div class="t" style="left:334.70px;top:808.25px;font-size:14px;font-weight:400;color:#1f1f22;transform:scaleX(0.9649);-webkit-text-stroke:0.35px currentColor;">Task updated</div>
<div class="t" style="left:333.69px;top:829.62px;font-size:12.5px;font-weight:400;color:#88898d;transform:scaleX(1.0054);">Dependencies dont connect when not showing closed tasks</div>
<div class="t" style="left:880.00px;top:810.59px;font-size:11px;font-weight:400;color:#9fa0a4;transform:scaleX(1.0090);">18h ago</div>
<div class="t" style="left:334.70px;top:862.25px;font-size:14px;font-weight:400;color:#1f1f22;transform:scaleX(0.9649);-webkit-text-stroke:0.35px currentColor;">Task updated</div>
<div class="t" style="left:334.70px;top:883.62px;font-size:12.5px;font-weight:400;color:#88898d;transform:scaleX(0.9832);">Scheduling System</div>
<div class="t" style="left:880.00px;top:864.59px;font-size:11px;font-weight:400;color:#9fa0a4;transform:scaleX(1.0090);">18h ago</div>
<div class="t" style="left:334.70px;top:916.25px;font-size:14px;font-weight:400;color:#1f1f22;transform:scaleX(0.9649);-webkit-text-stroke:0.35px currentColor;">Task updated</div>
<div class="t" style="left:333.71px;top:937.62px;font-size:12.5px;font-weight:400;color:#88898d;transform:scaleX(0.9929);">Fix UI of schedules</div>
<div class="t" style="left:880.00px;top:918.59px;font-size:11px;font-weight:400;color:#9fa0a4;transform:scaleX(1.0090);">18h ago</div>
<div class="t" style="left:334.70px;top:970.25px;font-size:14px;font-weight:400;color:#1f1f22;transform:scaleX(0.9649);-webkit-text-stroke:0.35px currentColor;">Task updated</div>
<div class="t" style="left:333.70px;top:991.62px;font-size:12.5px;font-weight:400;color:#88898d;">File Tags</div>
<div class="t" style="left:880.00px;top:972.59px;font-size:11px;font-weight:400;color:#9fa0a4;transform:scaleX(1.0090);">18h ago</div>
<div class="t" style="left:334.70px;top:1024.25px;font-size:14px;font-weight:400;color:#1f1f22;transform:scaleX(0.9649);-webkit-text-stroke:0.35px currentColor;">Task updated</div>
<div class="t" style="left:333.72px;top:1045.62px;font-size:12.5px;font-weight:400;color:#88898d;transform:scaleX(0.9835);">Plus Sign</div>
<div class="t" style="left:880.00px;top:1026.59px;font-size:11px;font-weight:400;color:#9fa0a4;transform:scaleX(1.0090);">18h ago</div>
<div class="t" style="left:1044.46px;top:248.07px;font-size:20px;font-weight:400;color:#1b1b1f;transform:scaleX(0.9352);-webkit-text-stroke:0.22px currentColor;">My Jobs</div>
<div class="t" style="left:1573.00px;top:250.70px;font-size:15px;font-weight:400;color:#1b559c;transform:scaleX(0.9422);">View All</div>
<div class="t" style="left:1069.80px;top:312.15px;font-size:16px;font-weight:400;color:#1f1f22;transform:scaleX(0.9458);-webkit-text-stroke:0.22px currentColor;">Testing</div>
<div class="t" style="left:1086.00px;top:335.79px;font-size:13px;font-weight:400;color:#7a7a7c;transform:scaleX(0.9330);">124 Bowles Dr</div>
<div class="t" style="left:1547.60px;top:323.94px;font-size:12px;font-weight:400;color:#e8630a;transform:scaleX(0.9706);-webkit-text-stroke:0.5px currentColor;">Bidding</div>
<div class="t" style="left:1069.80px;top:398.15px;font-size:16px;font-weight:400;color:#1f1f22;transform:scaleX(0.8925);-webkit-text-stroke:0.22px currentColor;">TaskFleet</div>
<div class="t" style="left:1086.00px;top:421.79px;font-size:13px;font-weight:400;color:#7a7a7c;transform:scaleX(0.9330);">124 Bowles Dr</div>
<div class="t" style="left:1554.10px;top:409.94px;font-size:12px;font-weight:400;color:#2e7d32;transform:scaleX(0.9605);-webkit-text-stroke:0.5px currentColor;">Active</div>
<div class="t" style="left:1044.27px;top:544.47px;font-size:20px;font-weight:400;color:#1b1b1f;transform:scaleX(0.9254);-webkit-text-stroke:0.22px currentColor;">My Tasks</div>
<div class="t" style="left:1572.80px;top:546.70px;font-size:15px;font-weight:400;color:#1b559c;transform:scaleX(0.9422);">View All</div>
<div class="t" style="left:1035.80px;top:600.89px;font-size:13px;font-weight:400;color:#d32f2f;transform:scaleX(1.0170);-webkit-text-stroke:0.22px currentColor;">23 overdue tasks</div>
<div class="t" style="left:1029.23px;top:653.20px;font-size:15px;font-weight:400;color:#b71c1c;transform:scaleX(0.9738);-webkit-text-stroke:0.22px currentColor;">Do this</div>
<div class="t" style="left:1029.25px;top:676.79px;font-size:13px;font-weight:400;color:#7a7a7c;transform:scaleX(0.9525);">Basement That I love to see</div>
<div class="t" style="left:1524.60px;top:666.76px;font-size:11.5px;font-weight:400;color:#c62828;transform:scaleX(0.9797);-webkit-text-stroke:0.5px currentColor;">31 days ago</div>
<div class="t" style="left:1030.20px;top:730.20px;font-size:15px;font-weight:400;color:#b71c1c;transform:scaleX(0.9897);-webkit-text-stroke:0.22px currentColor;">asdfasdfasdf</div>
<div class="t" style="left:1029.25px;top:753.79px;font-size:13px;font-weight:400;color:#7a7a7c;transform:scaleX(0.9523);">Unknown Project</div>
<div class="t" style="left:1524.60px;top:743.76px;font-size:11.5px;font-weight:400;color:#c62828;transform:scaleX(0.9797);-webkit-text-stroke:0.5px currentColor;">23 days ago</div>
<div class="t" style="left:1030.20px;top:807.20px;font-size:15px;font-weight:400;color:#b71c1c;transform:scaleX(0.9930);-webkit-text-stroke:0.22px currentColor;">asdfasdfasf</div>
<div class="t" style="left:1029.25px;top:830.79px;font-size:13px;font-weight:400;color:#7a7a7c;transform:scaleX(0.9523);">Unknown Project</div>
<div class="t" style="left:1524.60px;top:820.76px;font-size:11.5px;font-weight:400;color:#c62828;transform:scaleX(0.9797);-webkit-text-stroke:0.5px currentColor;">18 days ago</div>
<div class="t" style="left:1029.22px;top:884.20px;font-size:15px;font-weight:400;color:#b71c1c;transform:scaleX(0.9757);-webkit-text-stroke:0.22px currentColor;">Forms</div>
<div class="t" style="left:1030.20px;top:907.79px;font-size:13px;font-weight:400;color:#7a7a7c;transform:scaleX(0.9372);">TaskFleet</div>
<div class="t" style="left:1524.60px;top:897.76px;font-size:11.5px;font-weight:400;color:#c62828;transform:scaleX(0.9797);-webkit-text-stroke:0.5px currentColor;">12 days ago</div>
<div class="t" style="left:1029.24px;top:961.20px;font-size:15px;font-weight:400;color:#b71c1c;transform:scaleX(0.9626);-webkit-text-stroke:0.22px currentColor;">In dashboard</div>
<div class="t" style="left:1030.20px;top:984.79px;font-size:13px;font-weight:400;color:#7a7a7c;transform:scaleX(0.9372);">TaskFleet</div>
<div class="t" style="left:1524.60px;top:974.76px;font-size:11.5px;font-weight:400;color:#c62828;transform:scaleX(0.9797);-webkit-text-stroke:0.5px currentColor;">12 days ago</div>
</body></html>
